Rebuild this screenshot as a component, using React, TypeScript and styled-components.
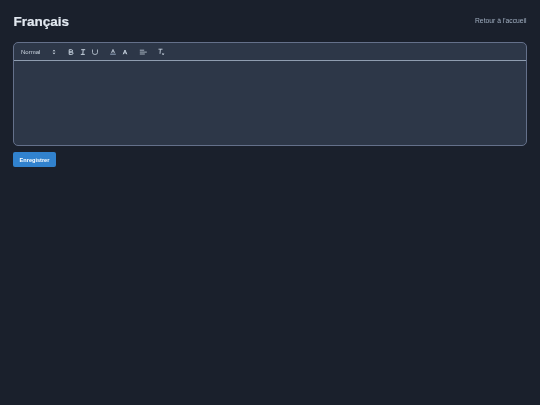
import React from "react";
import styled, { createGlobalStyle } from "styled-components";

const Global = createGlobalStyle`
  html, body { margin: 0; padding: 0; background: #1a202c; }
  body { font-family: "Liberation Sans", Arial, sans-serif; }
`;
const Page = styled.main`
  box-sizing: border-box;
  width: 540px;
  height: 405px;
  padding: 12px 13px;
  background: #1a202c;
  overflow: hidden;
`;
const Header = styled.header`
  display: flex;
  justify-content: space-between;
  align-items: center;
  height: 18px;
  margin-bottom: 12px;
`;
const Title = styled.h1`
  margin: 0;
  padding: 1px 0 0 0.5px;
  font-size: 13.5px;
  line-height: 18px;
  font-weight: 700;
  color: #e2e8f0;
  -webkit-text-stroke: 0.2px #e2e8f0;
  will-change: transform;
`;
const BackLink = styled.a`
  display: block;
  margin-top: -1px;
  font-size: 6.75px;
  color: #a0aec0;
  will-change: transform;
`;
const Editor = styled.section`
  box-sizing: border-box;
  height: 104px;
  border: 1px solid #64708a;
  border-radius: 5px;
  background: #2d3748;
  display: flex;
  flex-direction: column;
  overflow: hidden;
`;
const Toolbar = styled.div`
  box-sizing: border-box;
  height: 18px;
  flex: none;
  display: flex;
  align-items: center;
  padding-left: 7px;
  border-bottom: 1px solid #8f9db0;
`;
const Picker = styled.div`
  width: 37.5px;
  flex: none;
  display: flex;
  justify-content: space-between;
  align-items: center;
  padding-right: 1.5px;
  box-sizing: border-box;
  font-size: 6px;
  color: #cbd5e0;
`;
const PickerLabel = styled.span`
  display: block;
  will-change: transform;
`;
const Group = styled.div`
  display: flex;
  align-items: center;
  margin-left: 6px;
`;
const Cell = styled.span`
  width: 12px;
  display: flex;
  justify-content: center;
  align-items: center;
`;
const Icon = styled.svg`
  display: block;
  width: 8px;
  height: 8px;
  fill: none;
  stroke: #c3cedb;
  stroke-width: 0.8;
`;
const ArrowIcon = styled(Icon)`
  width: 6px;
  height: 6px;
`;
const Content = styled.div`
  flex: 1;
`;
const Save = styled.button`
  display: block;
  margin-top: 6px;
  width: 43px;
  height: 15px;
  padding: 0;
  border: 0;
  border-radius: 2px;
  background: #3182ce;
  color: #fff;
  font-family: inherit;
  font-size: 5.6px;
  font-weight: 700;
`;
const SaveLabel = styled.span`
  display: block;
  will-change: transform;
`;

export default function App() {
  return (
    <Page>
      <Global />
      <Header>
        <Title>Français</Title>
        <BackLink>Retour à l'accueil</BackLink>
      </Header>
      <Editor>
        <Toolbar>
          <Picker>
            <PickerLabel>Normal</PickerLabel>
            <ArrowIcon viewBox="0 0 8 8">
              <path d="M2 3 4 1 6 3ZM2 5 4 7 6 5Z" fill="#cbd5e0" stroke="none" />
            </ArrowIcon>
          </Picker>
          <Group>
            <Cell><Icon viewBox="0 0 8 8"><path d="M2.2 1.7h2.2a1.1 1.1 0 0 1 0 2.3H2.2zM2.2 4h2.6a1.2 1.2 0 0 1 0 2.4H2.2z" strokeWidth="1" /></Icon></Cell>
            <Cell><Icon viewBox="0 0 8 8"><path d="M2.2 1.7h4M1.8 6.4h4M4.2 1.7 3.8 6.4" strokeWidth="1" /></Icon></Cell>
            <Cell><Icon viewBox="0 0 8 8"><path d="M1.5 1.5v3a2.5 2 0 0 0 5 0v-3" /></Icon></Cell>
          </Group>
          <Group>
            <Cell><Icon viewBox="0 0 8 8"><path d="M2.4 4.8 4 1.4l1.6 3.4M3 3.8h2" /><path d="M1.2 6.3h5.6" strokeWidth="1.6" stroke="#718096" /></Icon></Cell>
            <Cell><Icon viewBox="0 0 8 8"><path d="M2.2 6.3 4 2l1.8 4.3M2.8 4.9h2.4" strokeWidth="1" /></Icon></Cell>
          </Group>
          <Group>
            <Cell><Icon viewBox="0 0 8 8"><path d="M.8 2.2h4.4M.8 4.1h7M.8 6h5" /></Icon></Cell>
          </Group>
          <Group>
            <Cell><Icon viewBox="0 0 8 8"><path d="M1.5 1.2h4M3.4 1.2 3 5.8" strokeWidth=".9" /><path d="M5.2 5.2l1.8 1.8M7 5.2 5.2 7" strokeWidth=".7" /></Icon></Cell>
          </Group>
        </Toolbar>
        <Content />
      </Editor>
      <Save><SaveLabel>Enregistrer</SaveLabel></Save>
    </Page>
  );
}
